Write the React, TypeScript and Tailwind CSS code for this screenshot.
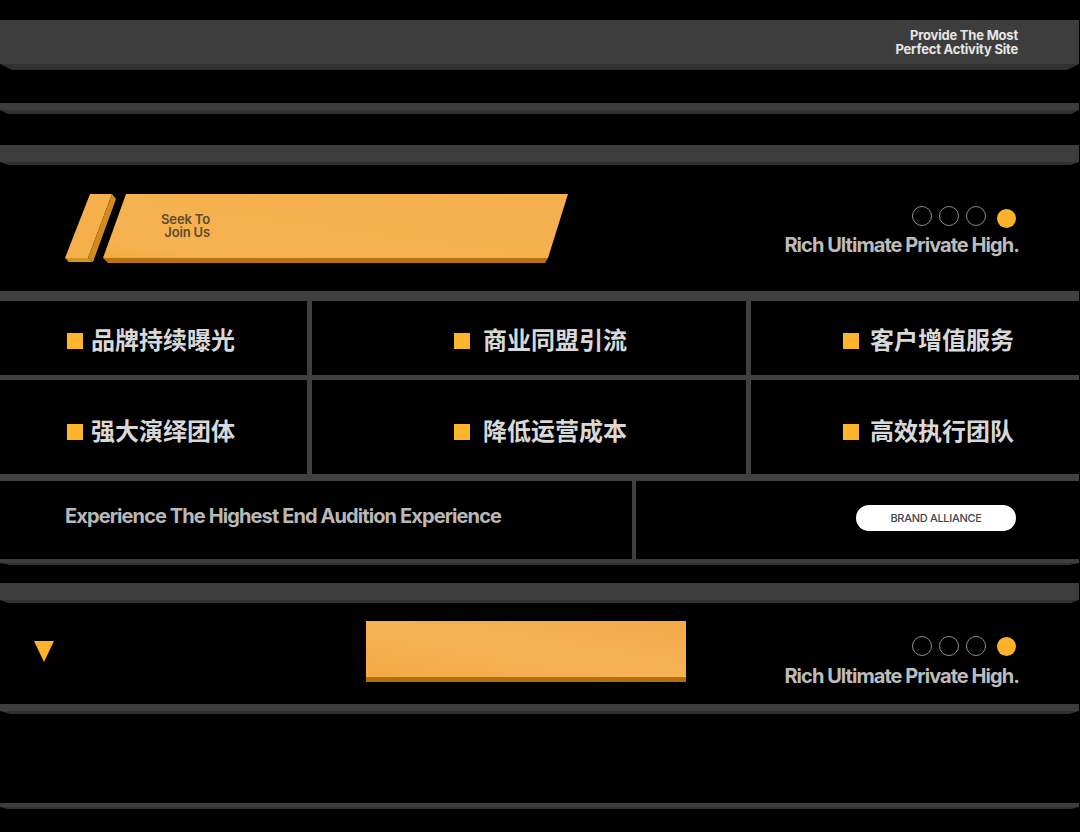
const Band = ({ height, bevel, cut = 12 }: { height: number; bevel: number; cut?: number }) => (
  <div>
    <div className="bg-[#3d3d3d]" style={{ height }} />
    <div
      className="bg-[#313131]"
      style={{
        height: bevel,
        clipPath: `polygon(0 0, 100% 0, calc(100% - ${cut}px) 100%, ${cut}px 100%)`,
      }}
    />
  </div>
);

const Dots = ({ shift }: { shift: string }) => (
  <div className="flex items-start justify-end pr-[63px]">
    <span className="w-[20px] h-[20px] rounded-full border border-[#8c8c8c]" />
    <span className="ml-[7px] w-[20px] h-[20px] rounded-full border border-[#8c8c8c]" />
    <span className="ml-[7px] w-[20px] h-[20px] rounded-full border border-[#8c8c8c]" />
    <span className={`ml-[11px] w-[19px] h-[19px] rounded-full bg-[#fdb22b] ${shift}`} />
  </div>
);

const Tagline = () => (
  <p className="text-right pr-[60px] text-[20px] leading-[24px] font-bold tracking-[-0.95px] text-[#bcbcbc] whitespace-nowrap">
    Rich Ultimate Private High.
  </p>
);

const Feature = ({ label, left, top, gap }: { label: string; left: string; top: string; gap: string }) => (
  <div className={`bg-black flex items-center ${left} ${top}`}>
    <span className="w-[16px] h-[16px] bg-[#fdb52b] shrink-0" />
    <span className={`text-[24px] leading-[32px] font-bold text-[#d8d8d8] whitespace-nowrap ${gap}`}>{label}</span>
  </div>
);

export default function App() {
  return (
    <div
      className="w-[1080px] h-[832px] bg-black overflow-hidden pr-px"
      style={{ fontFamily: "Inter, 'Noto Sans CJK SC', sans-serif" }}
    >
      <div className="h-[20px]" />

      {/* top band */}
      <div className="relative">
        <Band height={44} bevel={6} />
        <div className="absolute right-[61px] top-[8px] text-right text-[13px] leading-[14px] font-bold tracking-[-0.2px] text-[#e6e6e6]">
          <p>Provide The Most</p>
          <p>Perfect Activity Site</p>
        </div>
      </div>

      <div className="h-[33px]" />
      <Band height={7} bevel={4} cut={8} />
      <div className="h-[31px]" />
      <Band height={17} bevel={3} cut={8} />

      {/* hero */}
      <div className="h-[126px] relative">
        <svg className="absolute left-0 top-0" width="600" height="126" viewBox="0 165 600 126">
          <defs>
            <linearGradient id="face" x1="0" y1="1" x2="1" y2="0">
              <stop offset="0" stopColor="#f2a83f" />
              <stop offset="0.12" stopColor="#f6b250" />
              <stop offset="1" stopColor="#f4ae4d" />
            </linearGradient>
          </defs>
          <polygon points="90,194 112,194 88,258 65,258" fill="#f5b04b" />
          <polygon points="112,194 116,199 93,262 88,258" fill="#cf8b1c" />
          <polygon points="65,258 88,258 93,262 69,262" fill="#d9941f" />
          <polygon points="126,194 568,194 548,258 103,258" fill="url(#face)" />
          <polygon points="103,258 548,258 545,263 108,263" fill="#b8720d" />
        </svg>
        <div className="absolute left-[150px] w-[60px] top-[48px] text-right text-[13px] leading-[13px] font-semibold tracking-[-0.15px] text-[#5b4a2e]">
          <p>Seek To</p>
          <p>Join Us</p>
        </div>
        <div className="pt-[41px]">
          <Dots shift="mt-[3px]" />
        </div>
        <div className="mt-[5px]">
          <Tagline />
        </div>
      </div>

      {/* features */}
      <div className="h-[10px] bg-[#404040]" />
      <div className="grid grid-cols-[307px_434px_1fr] grid-rows-[74px_94px] gap-[5px] bg-[#404040]">
        <Feature label="品牌持续曝光" left="pl-[67px]" top="pt-[6px]" gap="ml-[8px]" />
        <Feature label="商业同盟引流" left="pl-[142px]" top="pt-[6px]" gap="ml-[13px]" />
        <Feature label="客户增值服务" left="pl-[92px]" top="pt-[6px]" gap="ml-[11px]" />
        <Feature label="强大演绎团体" left="pl-[67px]" top="pt-[9px]" gap="ml-[8px]" />
        <Feature label="降低运营成本" left="pl-[142px]" top="pt-[10px]" gap="ml-[13px]" />
        <Feature label="高效执行团队" left="pl-[92px]" top="pt-[10px]" gap="ml-[11px]" />
      </div>
      <div className="h-[7px] bg-[#404040]" />
      <div className="flex h-[78px]">
        <div className="w-[632px] flex items-center pl-[65px] pb-[8px]">
          <p className="text-[20px] font-bold tracking-[-0.9px] text-[#b8b8b8] whitespace-nowrap">
            Experience The Highest End Audition Experience
          </p>
        </div>
        <div className="w-[4px] bg-[#404040]" />
        <div className="flex-1 flex items-center justify-end pr-[63px] pb-[4px]">
          <span className="w-[160px] h-[26px] rounded-full bg-white flex items-center justify-center text-[11px] font-medium tracking-[-0.3px] text-[#444444]">
            BRAND ALLIANCE
          </span>
        </div>
      </div>
      <Band height={4} bevel={2} cut={10} />

      <div className="h-[18px]" />
      <Band height={17} bevel={3} cut={8} />

      {/* lower row */}
      <div className="h-[101px] relative">
        <svg className="absolute left-[34px] top-[38px]" width="20" height="21" viewBox="0 0 20 21">
          <polygon points="0,0 20,0 10,21" fill="#fdb22b" />
        </svg>
        <div className="absolute left-[366px] top-[18px] w-[320px]">
          <div className="h-[56px] bg-gradient-to-tr from-[#f3aa45] via-[#f6b255] to-[#f2a94a]" />
          <div className="h-[5px] bg-[#b56f0b]" />
        </div>
        <div className="pt-[33px]">
          <Dots shift="mt-px" />
        </div>
        <div className="mt-[8px]">
          <Tagline />
        </div>
      </div>

      <Band height={7} bevel={3} cut={10} />
      <div className="h-[89px]" />
      <Band height={4} bevel={2} cut={8} />
    </div>
  );
}
